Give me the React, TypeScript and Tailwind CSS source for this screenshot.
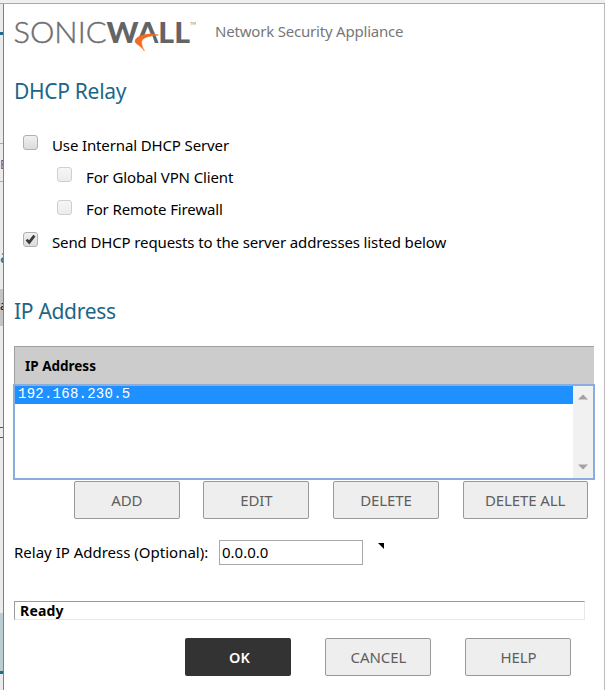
import React, { useState } from 'react'

interface OptionProps {
  label: string
  checked: boolean
  disabled?: boolean
  nested?: boolean
  onToggle?: () => void
}

const Option = ({ label, checked, disabled, nested, onToggle }: OptionProps) => {
  return (
    <label className={`flex h-[32.3px] items-center ${nested ? 'pl-[53px]' : 'pl-[19px]'}`}>
      <input type="checkbox" className="sr-only" checked={checked} disabled={disabled} onChange={() => onToggle?.()} />
      <span
        className={`-mt-[5px] h-[15px] w-[15px] shrink-0 rounded-[3px] border bg-gradient-to-b ${
          disabled ? 'border-[#cfcfcf] from-[#f6f6f6] to-[#ececec]' : 'border-[#b0b0b0] from-[#f0f0f0] to-[#dcdcdc]'
        }`}
      >
        {checked && (
          <svg viewBox="0 0 13 13" className="block h-[13px] w-[13px]">
            <path d="M2.6 6.6 L5.2 9.4 L10.4 2.6" fill="none" stroke="#3a3a3a" strokeWidth="2.7" />
          </svg>
        )}
      </span>
      <span className="ml-[14px] whitespace-nowrap text-[15px] leading-none tracking-[-0.13px] text-black">{label}</span>
    </label>
  )
}

const Button = ({ children, wide }: { children: string; wide?: boolean }) => {
  return (
    <button
      type="button"
      className={`h-[38px] rounded-[2px] border border-[#999] bg-[#eee] text-[15px] leading-none tracking-[-0.1px] text-[#5e5e5e] ${wide ? 'w-[125px]' : 'w-[106px]'}`}
    >
      {children}
    </button>
  )
}

const Logo = () => {
  return (
    <svg width="184" height="36" viewBox="0 0 184 36" className="block">
      <text x="-0.5" y="24" fontFamily="Lato" fontWeight="300" fontSize="29" fill="#6d6e71" stroke="#6d6e71" strokeWidth="0.4" textLength="93" lengthAdjust="spacingAndGlyphs">SONIC</text>
      <text x="92.5" y="24" fontFamily="Lato" fontWeight="900" fontSize="29" fill="#636466" textLength="83.5" lengthAdjust="spacingAndGlyphs">WALL</text>
      <path d="M119 26 L122 20 L130 17 L138.5 17 L141.5 26 Z" fill="#fff" />
      <path d="M144.5 16 C140 15 136.5 14.9 132.7 15.2 C127 16 121 18.5 121 22.5 C121.5 25 126 26 130.5 32 C128.5 28.5 127.2 25.5 127.7 22 C129 19 134 16.9 144.5 16 Z" fill="#f26b21" stroke="#f26b21" strokeWidth="0.5" />
      <text x="176" y="6" fontFamily="Lato" fontSize="4" fill="#77787b">TM</text>
    </svg>
  )
}

// sliver of the page that sits behind the popup
const PageEdge = () => {
  return (
    <div className="flex w-[3px] shrink-0 flex-col overflow-hidden bg-[#ebebeb]">
      <div className="h-[28px]" />
      <div className="h-[3px] bg-[#1f6a8a]" />
      <div className="h-[108px]" />
      <div className="h-px bg-[#aaa]" />
      <div className="h-[37px] pt-[12px] text-[13px] leading-[16px] text-[#74507a]">E</div>
      <div className="h-px bg-[#aaa]" />
      <div className="h-[107px] pt-[64px] text-[18px] leading-[20px] text-[#1f6a8a]">a</div>
      <div className="h-[37px] bg-[#c4c4c4] pt-[9px] text-[12px] leading-[16px] text-black">a</div>
      <div className="h-[101px]" />
      <div className="h-[11px] border-y border-[#1f6a8a]" />
      <div className="h-[175px]" />
      <div className="h-[58px] bg-[#bccdd2]" />
      <div className="h-[3px] bg-[#1f6a8a]" />
    </div>
  )
}

const App = () => {
  const [internal, setInternal] = useState<boolean>(false)
  const [send, setSend] = useState<boolean>(true)
  const [relayIp, setRelayIp] = useState<string>("0.0.0.0")

  return (
    <div className="flex h-[690px] w-[605px] flex-col overflow-hidden bg-white font-['Noto_Sans',sans-serif]">
      <div className="h-[4px] shrink-0 border-b border-[#a9abb0] bg-[#eef0f0]" />
      <div className="flex min-h-0 flex-1">
        <PageEdge />
        <div className="flex min-w-0 flex-1 flex-col border-x border-l-[#808080] border-r-[#bbb]">
          <div className="flex h-[68px] shrink-0 pl-[10px] pt-[15px]">
            <Logo />
            <span className="ml-[17px] mt-[4px] whitespace-nowrap text-[15px] leading-[17px] tracking-[-0.2px] text-[#777]">Network Security Appliance</span>
          </div>

          <h1 className="h-[57px] pl-[10px] pt-[7px] text-[21px] leading-[24px] tracking-[-0.3px] text-[#1b6688]">DHCP Relay</h1>

          <Option label="Use Internal DHCP Server" checked={internal} onToggle={() => setInternal(!internal)} />
          <Option label="For Global VPN Client" checked={false} disabled={!internal} nested />
          <Option label="For Remote Firewall" checked={false} disabled={!internal} nested />
          <Option label="Send DHCP requests to the server addresses listed below" checked={send} onToggle={() => setSend(!send)} />

          <h1 className="mt-[41px] h-[47px] pl-[10px] text-[21px] leading-[24px] tracking-[-0.3px] text-[#1b6688]">IP Address</h1>

          <div className="ml-[10px] flex h-[38px] w-[580px] shrink-0 items-center border-l border-t border-[#a0a0a0] bg-[#ccc] pl-[10px] text-[13.5px] font-bold text-black">
            IP Address
          </div>
          <div className="ml-[9px] flex h-[96px] w-[582px] shrink-0 border-2 border-[#8badde]">
            <div className="flex-1">
              <div className="h-[18px] bg-[#1e90ff] pl-[3px] font-['Liberation_Mono',monospace] text-[14px] leading-[17px] tracking-[0.25px] text-white">192.168.230.5</div>
            </div>
            <div className="flex w-[20px] flex-col items-center justify-between bg-[#f1f1f1] py-[8px]">
              <svg width="10" height="6"><path d="M0 5.5 L5 0.5 L10 5.5Z" fill="#a3a3a3" /></svg>
              <svg width="10" height="6"><path d="M0 0.5 L5 5.5 L10 0.5Z" fill="#a3a3a3" /></svg>
            </div>
          </div>

          <div className="mt-px flex gap-[23.6px] pl-[69.8px]">
            <Button>ADD</Button>
            <Button>EDIT</Button>
            <Button>DELETE</Button>
            <Button wide>DELETE ALL</Button>
          </div>

          <div className="mt-[21px] flex h-[25px] items-center pl-[10px]">
            <label htmlFor="relay" className="w-[205px] whitespace-nowrap text-[15px] leading-none text-black">Relay IP Address (Optional):</label>
            <input
              id="relay"
              type="text"
              value={relayIp}
              onChange={(e) => setRelayIp(e.target.value)}
              className="h-[25px] w-[144px] border border-[#a9a9a9] pb-[2px] pl-[2px] text-[15px] leading-none text-black outline-none"
            />
            <svg width="6" height="6" className="-mt-[13px] ml-[15px]"><path d="M0 0 H6 V6Z" fill="#000" /></svg>
          </div>

          <div className="ml-[10px] mt-[36px] h-[19px] w-[571px] shrink-0 border border-[#e8e8e8] border-l-[#999] border-t-[#999] pl-[5px] text-[14px] font-bold leading-[18px] tracking-[0.2px] text-black">
            Ready
          </div>

          <div className="mt-[18px] flex gap-[34px] pl-[181.4px]">
            <button type="button" className="h-[38px] w-[106px] rounded-[2px] bg-[#333] pl-[2px] text-[14.5px] font-semibold leading-none text-white">OK</button>
            <Button>CANCEL</Button>
            <Button>HELP</Button>
          </div>
        </div>
      </div>
    </div>
  )
}

export default App
